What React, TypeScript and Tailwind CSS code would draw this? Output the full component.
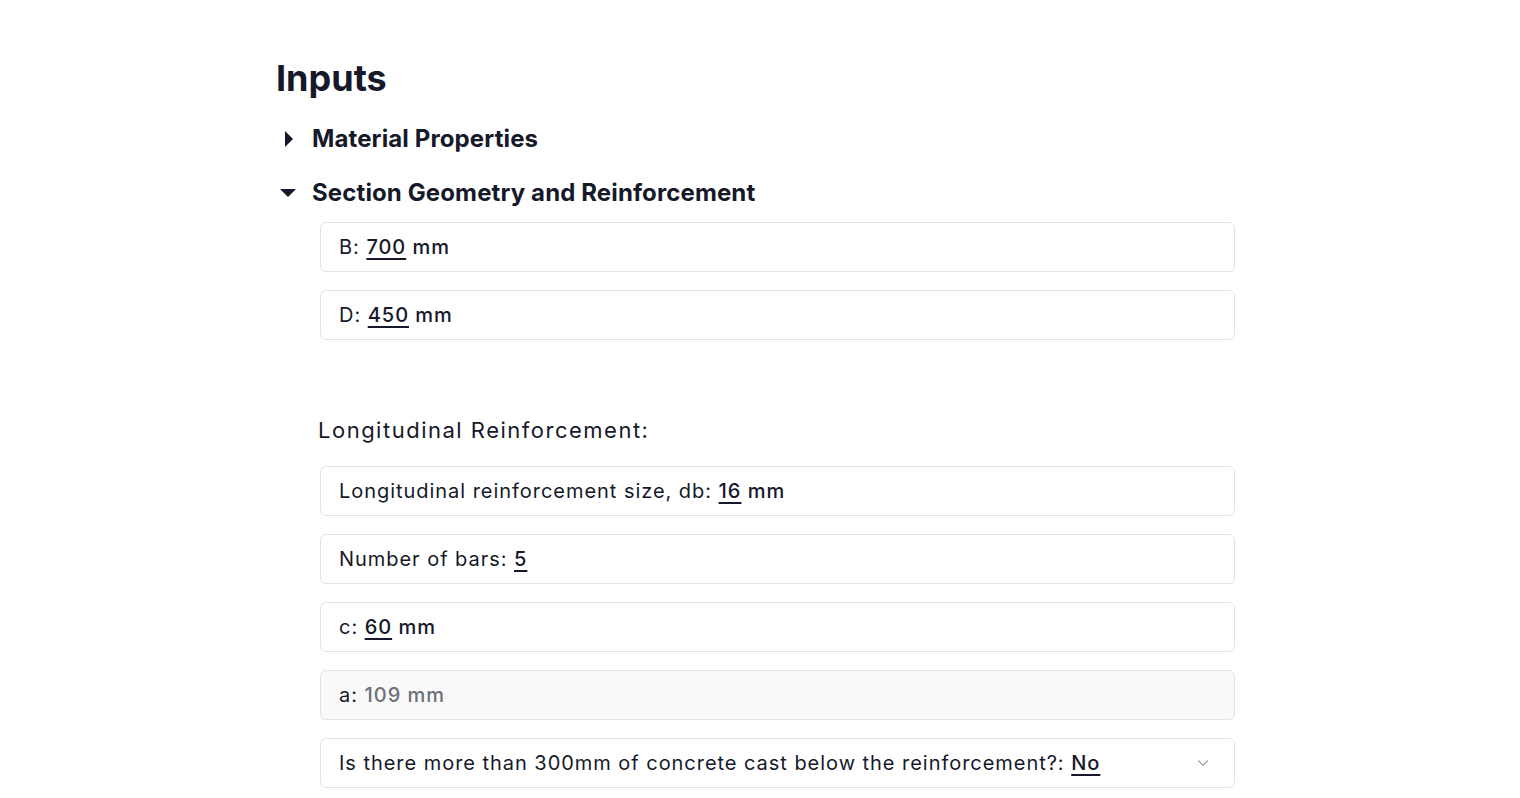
import { ChevronDown } from 'lucide-react'

interface FieldProps {
  label: string
  value: string
  unit?: string
  disabled?: boolean
  select?: boolean
}

function Field({ label, value, unit, disabled, select }: FieldProps) {
  return (
    <div
      className={`flex h-[50px] items-center justify-between rounded-md border border-[#e3e3e6] pl-[18px] pr-[22px] text-[20px] tracking-[0.048em] text-[#15192a] ${
        disabled ? 'bg-[#f9f9fa]' : 'bg-white'
      }`}
    >
      <span>
        {label}:{' '}
        {disabled ? (
          <span className="font-medium text-[#6e7078]">
            {value}
            {unit ? ` ${unit}` : ''}
          </span>
        ) : (
          <span className="font-medium">
            <span className="underline decoration-[1.5px] underline-offset-[4px]">{value}</span>
            {unit ? ` ${unit}` : ''}
          </span>
        )}
      </span>
      {select && <ChevronDown className="text-[#9a9ca3]" size={18} strokeWidth={1.5} />}
    </div>
  )
}

function Triangle({ open }: { open: boolean }) {
  return (
    <svg width="18" height="18" viewBox="0 0 18 18" className="shrink-0">
      {open ? (
        <polygon points="1,5 17,5 9,13" fill="#15192a" />
      ) : (
        <polygon points="5,1 13,9 5,17" fill="#15192a" />
      )}
    </svg>
  )
}

export default function App() {
  return (
    <div className="min-h-screen bg-white" style={{ fontFamily: 'Inter, "Open Sans", sans-serif' }}>
      <div className="mx-auto max-w-[968px] pt-[55px]">
        <h1 className="text-[36px] font-bold leading-[46px] text-[#15192a]">Inputs</h1>

        <div className="mt-[11px] flex h-[54px] items-center gap-[14px] pl-[4px]">
          <Triangle open={false} />
          <span className="text-[24px] font-bold tracking-[0.005em] text-[#15192a]">Material Properties</span>
        </div>
        <div className="flex h-[54px] items-center gap-[15px] pl-[3px]">
          <Triangle open />
          <span className="text-[24px] font-bold tracking-[0.005em] text-[#15192a]">Section Geometry and Reinforcement</span>
        </div>

        <div className="mt-[2px] pl-[44px] pr-[9px]">
          <div className="flex flex-col gap-[18px]">
            <Field label="B" value="700" unit="mm" />
            <Field label="D" value="450" unit="mm" />
          </div>

          <div className="mt-[74px] -ml-[2px] text-[22px] tracking-[1.5px] text-[#15192a]">Longitudinal Reinforcement:</div>

          <div className="mt-[19px] flex flex-col gap-[18px]">
            <Field label="Longitudinal reinforcement size, db" value="16" unit="mm" />
            <Field label="Number of bars" value="5" />
            <Field label="c" value="60" unit="mm" />
            <Field label="a" value="109" unit="mm" disabled />
            <Field label="Is there more than 300mm of concrete cast below the reinforcement?" value="No" select />
          </div>
        </div>
      </div>
    </div>
  )
}
